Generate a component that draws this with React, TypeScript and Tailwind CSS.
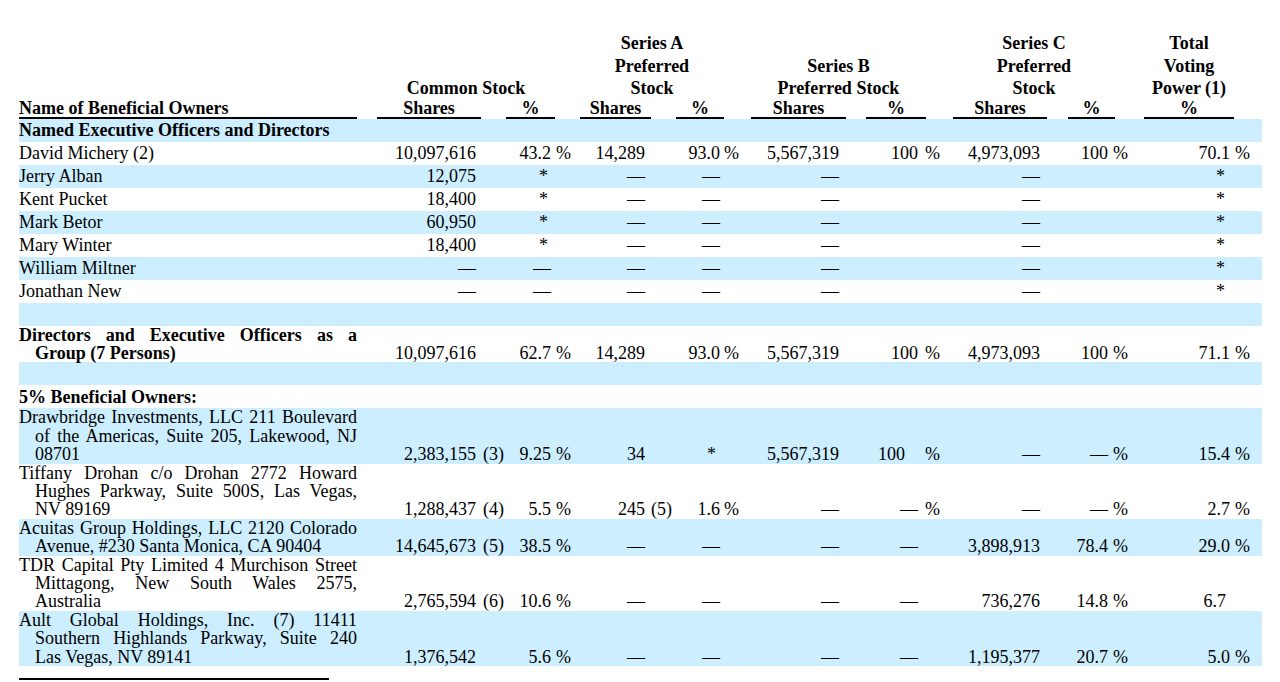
import type { ReactNode } from 'react'

type Cell = string | [string, string?, string?]

interface RowProps {
  name: string[]
  cells?: Cell[]
  bg?: boolean
  bold?: boolean
}

// value slot widths + suffix slot widths (x positions taken from the filing table)
const SLOTS = [
  { v: 'w-[119px]', s: 'w-[31px] pl-[7px]' },
  { v: 'w-[44px]', s: 'w-[29px] pl-[5px]' },
  { v: 'w-[65px]', s: 'w-[31px] pl-[6px]' },
  { v: 'w-[44px]', s: 'w-[30px] pl-[4px]' },
  { v: 'w-[89px]', s: 'w-[27px]' },
  { v: 'w-[52px]', s: 'w-[35px] pl-[7px]' },
  { v: 'w-[87px]', s: 'w-[28px]' },
  { v: 'w-[40px]', s: 'w-[36px] pl-[5px]' },
  { v: 'w-[86px]', s: 'w-[32px] pl-[5px]' },
]

const D = '—'
const STAR: Cell = ['*', '', 'pr-[3px]']
const minor: Cell[] = [STAR, D, D, D, '', D, '', ['*', '', 'pr-[5px]']]
const none: Cell[] = [D, D, D, D, D, '', D, '', ['*', '', 'pr-[5px]']]

function Row({ name, cells = [], bg, bold }: RowProps) {
  const multi = name.length > 1
  return (
    <div
      className={`flex w-[1243px] items-end leading-[18.4px] ${bg ? 'bg-[#cceeff]' : ''} ${
        multi ? '' : 'h-[23px] pb-[2px]'
      }`}
    >
      <div className={`w-[338px] shrink-0 ${bold ? 'font-bold' : ''}`}>
        {name.map((line, i) => (
          <div
            key={i}
            className={`${i > 0 ? 'pl-[16px]' : ''} ${
              i < name.length - 1 ? 'text-justify [text-align-last:justify]' : ''
            } whitespace-nowrap`}
          >
            {line}
          </div>
        ))}
      </div>
      {SLOTS.map((slot, i) => {
        const c = cells[i] ?? ''
        const [v, s, cls] = typeof c === 'string' ? [c, '', ''] : [c[0], c[1] ?? '', c[2] ?? '']
        return (
          <Slot key={i} vClass={`${slot.v} ${cls}`} sClass={slot.s} value={v} suffix={s} />
        )
      })}
    </div>
  )
}

function Slot({ vClass, sClass, value, suffix }: { vClass: string; sClass: string; value: ReactNode; suffix: ReactNode }) {
  return (
    <>
      <div className={`${vClass} shrink-0 whitespace-nowrap text-right`}>{value}</div>
      <div className={`${sClass} shrink-0 whitespace-nowrap text-left`}>{suffix}</div>
    </>
  )
}

export default function App() {
  return (
    <div className="min-h-screen bg-white pl-[19px] pt-[32px] font-['Liberation_Serif',serif] text-[18px] text-black">
      {/* group headings */}
      <div className="flex items-end text-center font-bold leading-[22.5px]">
        <div className="w-[358px] shrink-0" />
        <div className="w-[178px] shrink-0">Common Stock</div>
        <div className="w-[25px] shrink-0" />
        <div className="w-[144px] shrink-0">
          Series A<br />Preferred<br />Stock
        </div>
        <div className="w-[27px] shrink-0" />
        <div className="w-[175px] shrink-0">
          Series B<br />Preferred Stock
        </div>
        <div className="w-[27px] shrink-0" />
        <div className="w-[162px] shrink-0">
          Series C<br />Preferred<br />Stock
        </div>
        <div className="w-[29px] shrink-0" />
        <div className="w-[90px] shrink-0">
          Total<br />Voting<br />Power (1)
        </div>
      </div>

      {/* column headings */}
      <div className="-mt-[1px] flex text-center font-bold leading-[18px]">
        <div className="w-[338px] shrink-0 border-b-2 border-black text-left">Name of Beneficial Owners</div>
        <div className="w-[20px] shrink-0" />
        <div className="w-[104px] shrink-0 border-b-2 border-black">Shares</div>
        <div className="w-[25px] shrink-0" />
        <div className="w-[49px] shrink-0 border-b-2 border-black">%</div>
        <div className="w-[25px] shrink-0" />
        <div className="w-[71px] shrink-0 border-b-2 border-black">Shares</div>
        <div className="w-[25px] shrink-0" />
        <div className="w-[48px] shrink-0 border-b-2 border-black">%</div>
        <div className="w-[27px] shrink-0" />
        <div className="w-[95px] shrink-0 border-b-2 border-black">Shares</div>
        <div className="w-[20px] shrink-0" />
        <div className="w-[60px] shrink-0 border-b-2 border-black">%</div>
        <div className="w-[27px] shrink-0" />
        <div className="w-[94px] shrink-0 border-b-2 border-black">Shares</div>
        <div className="w-[21px] shrink-0" />
        <div className="w-[47px] shrink-0 border-b-2 border-black">%</div>
        <div className="w-[29px] shrink-0" />
        <div className="w-[90px] shrink-0 border-b-2 border-black">%</div>
      </div>

      <Row bg bold name={['Named Executive Officers and Directors']} />
      <Row
        name={['David Michery (2)']}
        cells={['10,097,616', ['43.2', '%'], '14,289', ['93.0', '%'], '5,567,319', ['100', '%'], '4,973,093', ['100', '%'], ['70.1', '%']]}
      />
      <Row bg name={['Jerry Alban']} cells={['12,075', ...minor]} />
      <Row name={['Kent Pucket']} cells={['18,400', ...minor]} />
      <Row bg name={['Mark Betor']} cells={['60,950', ...minor]} />
      <Row name={['Mary Winter']} cells={['18,400', ...minor]} />
      <Row bg name={['William Miltner']} cells={none} />
      <Row name={['Jonathan New']} cells={none} />
      <Row bg name={['']} />
      <Row
        bold
        name={['Directors and Executive Officers as a', 'Group (7 Persons)']}
        cells={['10,097,616', ['62.7', '%'], '14,289', ['93.0', '%'], '5,567,319', ['100', '%'], '4,973,093', ['100', '%'], ['71.1', '%']]}
      />
      <Row bg name={['']} />
      <Row bold name={['5% Beneficial Owners:']} />
      <Row
        bg
        name={['Drawbridge Investments, LLC 211 Boulevard', 'of the Americas, Suite 205, Lakewood, NJ', '08701']}
        cells={[['2,383,155', '(3)'], ['9.25', '%'], '34', ['*', '', 'pr-[4px]'], '5,567,319', ['100', '%', 'pr-[13px]'], D, [D, '%'], ['15.4', '%']]}
      />
      <Row
        name={['Tiffany Drohan c/o Drohan 2772 Howard', 'Hughes Parkway, Suite 500S, Las Vegas,', 'NV 89169']}
        cells={[['1,288,437', '(4)'], ['5.5', '%'], ['245', '(5)'], ['1.6', '%'], D, [D, '%'], D, [D, '%'], ['2.7', '%']]}
      />
      <Row
        bg
        name={['Acuitas Group Holdings, LLC 2120 Colorado', 'Avenue, #230 Santa Monica, CA 90404']}
        cells={[['14,645,673', '(5)'], ['38.5', '%'], D, D, D, D, '3,898,913', ['78.4', '%'], ['29.0', '%']]}
      />
      <Row
        name={['TDR Capital Pty Limited 4 Murchison Street', 'Mittagong, New South Wales 2575,', 'Australia']}
        cells={[['2,765,594', '(6)'], ['10.6', '%'], D, D, D, D, '736,276', ['14.8', '%'], ['6.7', '', 'pr-[4px]']]}
      />
      <Row
        bg
        name={['Ault Global Holdings, Inc. (7) 11411', 'Southern Highlands Parkway, Suite 240', 'Las Vegas, NV 89141']}
        cells={['1,376,542', ['5.6', '%'], D, D, D, D, '1,195,377', ['20.7', '%'], ['5.0', '%']]}
      />

      {/* footnote rule */}
      <div className="mt-[12px] h-[2px] w-[310px] bg-black" />
    </div>
  )
}
